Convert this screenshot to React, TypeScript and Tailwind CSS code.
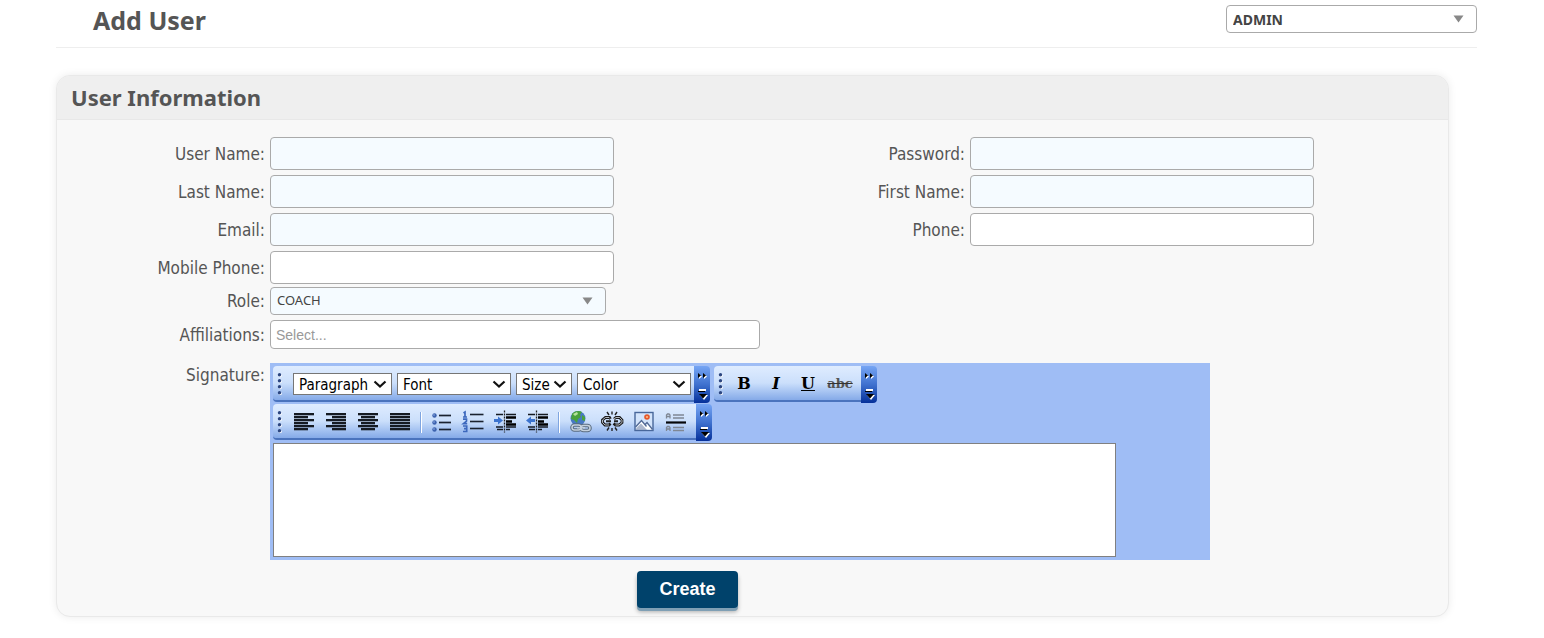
import React from "react";

const UI = "font-['Noto_Sans',sans-serif]";
const LABEL = "font-['DejaVu_Sans_Condensed','DejaVu_Sans',sans-serif]";

function Label({ htmlFor, children }: { htmlFor: string; children: React.ReactNode }) {
  return (
    <label
      htmlFor={htmlFor}
      className={`${LABEL} w-[208px] shrink-0 text-right text-[17px] leading-6 text-[#555]`}
    >
      {children}
    </label>
  );
}

function Field({ id, label, type = "text", required = false }: { id: string; label: string; type?: string; required?: boolean }) {
  return (
    <div className="flex items-center gap-[5px]">
      <Label htmlFor={id}>{label}</Label>
      <input
        id={id}
        type={type}
        className={`h-[33px] w-[344px] rounded-[4px] border border-[#aaa] px-2 text-sm outline-none ${required ? "bg-[#f5fbff]" : "bg-white"}`}
      />
    </div>
  );
}

function DropDown({ id, label, value, className, selectClass }: { id: string; label?: string; value: string; className: string; selectClass: string }) {
  return (
    <div className={`relative ${className}`}>
      <select
        id={id}
        aria-label={label}
        className={`block h-7 w-full appearance-none rounded-[4px] border border-[#aaa] px-[6px] text-[#444] outline-none ${selectClass}`}
      >
        <option>{value}</option>
      </select>
      <svg className="pointer-events-none absolute top-[10px] right-[13px] h-2 w-[11px]" viewBox="0 0 11 8">
        <path d="M.5 .5h10L5.5 7.5z" fill="#888" />
      </svg>
    </div>
  );
}

function Grip() {
  return (
    <svg className="h-[22px] w-[5px] shrink-0" viewBox="0 0 5 22">
      {[2, 8, 14, 20].map((y) => (
        <g key={y}>
          <circle cx="3.200" cy={y + 0.6} r="1.600" fill="#fff" />
          <circle cx="2.500" cy={y - 0.2} r="1.700" fill="#2c4680" />
        </g>
      ))}
    </svg>
  );
}

function EndCap() {
  return (
    <button
      type="button"
      aria-label="More buttons"
      className="h-[37px] w-4 shrink-0 rounded-r-[4px] bg-linear-to-b from-[#76a5f4] via-[#3f71cf] to-[#06309a]"
    >
      <svg className="h-[37px] w-4" viewBox="0 0 16 37">
        <path d="M5 8v5l3-2.500zM10 8v5l3-2.500z" fill="#fff" />
        <path d="M4 7v5l3-2.500zM9 7v5l3-2.500z" fill="#000" />
        <path d="M5 23h7v2h-7zM6 29h8l-4 5z" fill="#fff" />
        <path d="M4 25h7v1h-7zM5 28h8l-4 4.500z" fill="#000" />
      </svg>
    </button>
  );
}

function Toolbar({ label, children }: { label: string; children: React.ReactNode }) {
  return (
    <div role="toolbar" aria-label={label} className="flex h-[37px]">
      <div className="flex h-9 items-center rounded-l-[4px] border-b-2 border-[#4a73bd] bg-linear-to-b from-[#dfecff] via-[#cbdffb] via-50% to-[#85aae8] pt-[2px] pl-1">
        <Grip />
        {children}
      </div>
      <EndCap />
    </div>
  );
}

function ToolSelect({ label, className }: { label: string; className: string }) {
  return (
    <div className={`relative ${className}`}>
      <select
        aria-label={label}
        className={`block h-[22px] w-full appearance-none border border-[#767676] bg-white pl-[5px] text-[15px] text-black ${LABEL}`}
      >
        <option>{label}</option>
      </select>
      <svg className="pointer-events-none absolute top-[7px] right-[5px] h-2 w-[14px]" viewBox="0 0 14 8">
        <path d="M1.500 1.500L7 6.500l5.500-5" fill="none" stroke="#111" strokeWidth="2.200" />
      </svg>
    </div>
  );
}

function Tool({ label, children }: { label: string; children: React.ReactNode }) {
  return (
    <button type="button" aria-label={label} className="flex h-8 w-8 items-center justify-center text-black">
      {children}
    </button>
  );
}

function Icon({ children }: { children: React.ReactNode }) {
  return (
    <svg className="h-6 w-6" viewBox="0 0 24 24">
      {children}
    </svg>
  );
}

function Bars({ rows }: { rows: [number, number][] }) {
  return (
    <Icon>
      {rows.map(([x, w], i) => (
        <g key={i}>
          <rect x={x} y={3 + i * 3} width={w} height="2" fill="#151a22" />
          <rect x={x} y={5 + i * 3} width={w} height="1" fill="#151a22" opacity=".3" />
        </g>
      ))}
    </Icon>
  );
}

function Separator({ className }: { className: string }) {
  return (
    <div className={`flex justify-center ${className}`}>
      <div className="h-[21px] w-[2px] border-l border-[#7fa5e0] bg-white" />
    </div>
  );
}

const JUSTIFY: [number, number][] = [[2, 20], [2, 20], [2, 20], [2, 20], [2, 20], [2, 20]];
const LEFT: [number, number][] = [[2, 20], [2, 14], [2, 20], [2, 14], [2, 20], [2, 14]];
const RIGHT: [number, number][] = [[2, 20], [8, 14], [2, 20], [8, 14], [2, 20], [8, 14]];
const CENTER: [number, number][] = [[2, 20], [5, 14], [2, 20], [5, 14], [2, 20], [5, 14]];

function BulletIcon() {
  return (
    <Icon>
      {[6, 13, 20].map((y) => (
        <g key={y}>
          <circle cx="5.500" cy={y - 0.5} r="2.200" fill="#3c62ae" />
          <circle cx="5" cy={y - 1} r=".7" fill="#a9c6f6" />
          <path d={`M10 ${y - 0.5}h12`} stroke="#1a2230" strokeWidth="1.700" />
        </g>
      ))}
    </Icon>
  );
}

function NumberIcon() {
  return (
    <Icon>
      {[4.5, 11.5, 18.5].map((y) => (
        <path key={y} d={`M9 ${y}h13.500`} stroke="#1a2230" strokeWidth="1.600" />
      ))}
      <g fill="none" stroke="#3c68bd" strokeWidth="1.700">
        <path d="M2.500 3l1.500-1v5M2 7h4" />
        <path d="M2 9.200h3.500v2l-3 2.500h3.700" />
        <path d="M2 16h3.700v5.500h-3.700M3 18.700h2.500" />
      </g>
    </Icon>
  );
}

function IndentIcon({ out = false }: { out?: boolean }) {
  return (
    <Icon>
      <path d="M11.500 .5v22" stroke="#222" strokeWidth="1.300" strokeDasharray="2 1" />
      <path d="M3 4.500h7M3 17h7M13 4.500h10M13 17h10M4 19.500h6M13 19.500h4" stroke="#151a22" strokeWidth="1.500" />
      <path d="M13 7.500h10M13 11.500h6M13 14.500h10" stroke="#000" strokeWidth="2.600" />
      {out ? (
        <path d="M1 10.500l5-4v2.500h4v3h-4v2.500z" fill="#3c74cf" />
      ) : (
        <path d="M10 10.500l-5-4v2.500h-4v3h4v2.500z" fill="#3c74cf" />
      )}
    </Icon>
  );
}

function LinkIcon() {
  return (
    <Icon>
      <circle cx="10" cy="8.500" r="7.500" fill="#4779c3" />
      <path d="M4 4c2-3 7-4 10-2l-2 3 1 2-3 2-1 4-3-3-3-1zM14 5l3 2v4l-3-1z" fill="#49a13d" />
      <path d="M5 4l4-2 1 2-3 2z" fill="#b6e29d" />
      <g fill="none" stroke="#596b7f" strokeWidth="3.600">
        <rect x="4" y="15" width="9" height="5" rx="2.500" />
        <rect x="13" y="15.500" width="9" height="5" rx="2.500" />
      </g>
      <g fill="none" stroke="#c4d0dd" strokeWidth="1.500">
        <rect x="4" y="15" width="9" height="5" rx="2.500" />
        <rect x="13" y="15.500" width="9" height="5" rx="2.500" />
        <path d="M9 17.800h8" />
      </g>
    </Icon>
  );
}

function UnlinkIcon() {
  return (
    <Icon>
      <g fill="none" stroke="#1b1b1b" strokeWidth="2.800">
        <path d="M10.500 9l-1-1.500h-4L2.500 10v2.500l2.500 2.500h4l1.500-1.500" />
        <path d="M14 9l2-1.500h3.500l2.500 2.500v2.500l-3 2.500h-3.500l-2-1.500" />
      </g>
      <g fill="none" stroke="#d8dde4" strokeWidth=".8">
        <path d="M10 8.500l-1-1h-3.500L2.500 10v2.500l2.500 2.500h4" />
        <path d="M14 9l2-1.500h3.500l2.500 2.500v2.500l-3 2.500h-3.500" />
      </g>
      <path d="M6 11.300h5M14 11.300h4" stroke="#222" strokeWidth="2" />
      <path d="M7 2l2 3M12 1.500v3M17 2l-2 3M7 20.500l2-3M12 21v-3M17 20.500l-2-3" stroke="#222" strokeWidth="1.400" />
    </Icon>
  );
}

function ImageIcon() {
  return (
    <Icon>
      <rect x="3" y="2.500" width="18" height="18" fill="#d3e4fb" stroke="#48679b" strokeWidth="1.400" />
      <path d="M4 18l6-7 4 5 2-2 4.500 5.500H4z" fill="#fff" />
      <path d="M3.500 17l6-6.500 5 6M13 14.500l2-2 5.500 7" fill="none" stroke="#536a95" strokeWidth="1.300" />
      <path d="M4 18.500l5-5 6 6.500H4z" fill="#8192b4" opacity=".65" />
      <circle cx="15" cy="7" r="2.800" fill="#e6572a" />
      <circle cx="15" cy="7" r="1.100" fill="#ffbd83" />
    </Icon>
  );
}

function RuleIcon() {
  return (
    <Icon>
      <g fill="none" stroke="#7f8794" strokeWidth="1.300">
        <path d="M2.500 8.500V5l1-1h1.500l1 1v3.500M2.500 6.500h3.500M9 5h11M9 8h11" />
        <path d="M2.500 21V17.500l1-1h1.500l1 1v3.500M2.500 19h3.500M9 17.500h11M9 20.500h11" />
      </g>
      <path d="M2 12.500h20" stroke="#05070a" strokeWidth="2.200" />
    </Icon>
  );
}

export default function App() {
  return (
    <div className={`min-h-[638px] bg-white pl-14 ${UI}`}>
      <header className="mr-[67px] flex h-12 items-start justify-between border-b border-[#eee] pt-[5px] pl-[37px]">
        <h1 className="text-[25px] leading-[30px] font-bold text-[#555]">Add User</h1>
        <DropDown id="account" label="Account" value="ADMIN" className="w-[251px]" selectClass="bg-white text-[14px] font-bold" />
      </header>

      <main className="mt-[27px] mr-[95px] rounded-[14px] border border-[#e9e9e9] bg-[#f8f8f8] shadow-[0_0_8px_rgba(0,0,0,0.08)]">
        <h2 className="h-11 rounded-t-[13px] border-b border-[#e8e8e8] bg-[#efefef] pl-[14px] text-[22px] leading-[42px] font-bold text-[#555]">
          User Information
        </h2>

        <form className="pt-[17px] pb-2" onSubmit={(e) => e.preventDefault()}>
          <div className="grid grid-cols-[700fr_691fr] gap-y-[5px]">
            <Field id="username" label="User Name:" required />
            <Field id="password" label="Password:" type="password" required />
            <Field id="lastname" label="Last Name:" required />
            <Field id="firstname" label="First Name:" required />
            <Field id="email" label="Email:" type="email" required />
            <Field id="phone" label="Phone:" type="tel" />
            <Field id="mobile" label="Mobile Phone:" type="tel" />
          </div>

          <div className="mt-[3px] flex items-center gap-[5px]">
            <Label htmlFor="role">Role:</Label>
            <DropDown id="role" value="COACH" className="w-[336px]" selectClass="bg-[#f5fbff] text-[13px]" />
          </div>

          <div className="mt-[5px] flex items-center gap-[5px]">
            <Label htmlFor="affiliations">Affiliations:</Label>
            <input
              id="affiliations"
              placeholder="Select..."
              className="h-[29px] w-[490px] rounded-[4px] border border-[#aaa] bg-white px-[5px] font-['Liberation_Sans',sans-serif] text-[14px] outline-none placeholder:text-[#999]"
            />
          </div>

          <div className="mt-[14px] flex gap-[5px]">
            <Label htmlFor="signature">Signature:</Label>
            <div className="w-[940px] bg-[#9fbdf5] p-[3px]">
              <div className="flex gap-1">
                <Toolbar label="Format">
                  <div className="mr-[3px] ml-[11px] flex gap-[5px]">
                    <ToolSelect label="Paragraph" className="w-[99px]" />
                    <ToolSelect label="Font" className="w-[114px]" />
                    <ToolSelect label="Size" className="w-[56px]" />
                    <ToolSelect label="Color" className="w-[114px]" />
                  </div>
                </Toolbar>
                <Toolbar label="Text style">
                  <div className="mr-[5px] ml-[5px] flex font-['DejaVu_Serif',serif] text-[16px] font-bold">
                    <Tool label="Bold">B</Tool>
                    <Tool label="Italic"><em>I</em></Tool>
                    <Tool label="Underline"><u>U</u></Tool>
                    <Tool label="Strikethrough">
                      <s className="text-[13px] text-[#555] decoration-[#333]">abc</s>
                    </Tool>
                  </div>
                </Toolbar>
              </div>
              <div className="mt-px">
                <Toolbar label="Paragraph tools">
                  <div className="mr-1 ml-[6px] flex items-center">
                    <Tool label="Align left"><Bars rows={LEFT} /></Tool>
                    <Tool label="Align right"><Bars rows={RIGHT} /></Tool>
                    <Tool label="Align center"><Bars rows={CENTER} /></Tool>
                    <Tool label="Justify"><Bars rows={JUSTIFY} /></Tool>
                    <Separator className="w-[9px]" />
                    <Tool label="Bulleted list"><BulletIcon /></Tool>
                    <Tool label="Numbered list"><NumberIcon /></Tool>
                    <Tool label="Indent"><IndentIcon /></Tool>
                    <Tool label="Outdent"><IndentIcon out /></Tool>
                    <Separator className="w-[11px]" />
                    <Tool label="Insert link"><LinkIcon /></Tool>
                    <Tool label="Remove link"><UnlinkIcon /></Tool>
                    <Tool label="Insert image"><ImageIcon /></Tool>
                    <Tool label="Insert rule"><RuleIcon /></Tool>
                  </div>
                </Toolbar>
              </div>
              <textarea
                id="signature"
                className="mt-[2px] block h-[114px] w-[843px] resize-none border border-[#808080] bg-white p-2 text-sm outline-none"
              />
            </div>
          </div>

          <div className="mt-[11px] flex justify-center pr-[130px]">
            <button
              type="submit"
              className="h-[37px] w-[101px] rounded-[4px] bg-[#00426b] font-['Liberation_Sans',sans-serif] text-[18px] font-bold text-white shadow-[0_3px_0_#7f9fb4,0_4px_4px_rgba(0,0,0,0.3)]"
            >
              Create
            </button>
          </div>
        </form>
      </main>
    </div>
  );
}
